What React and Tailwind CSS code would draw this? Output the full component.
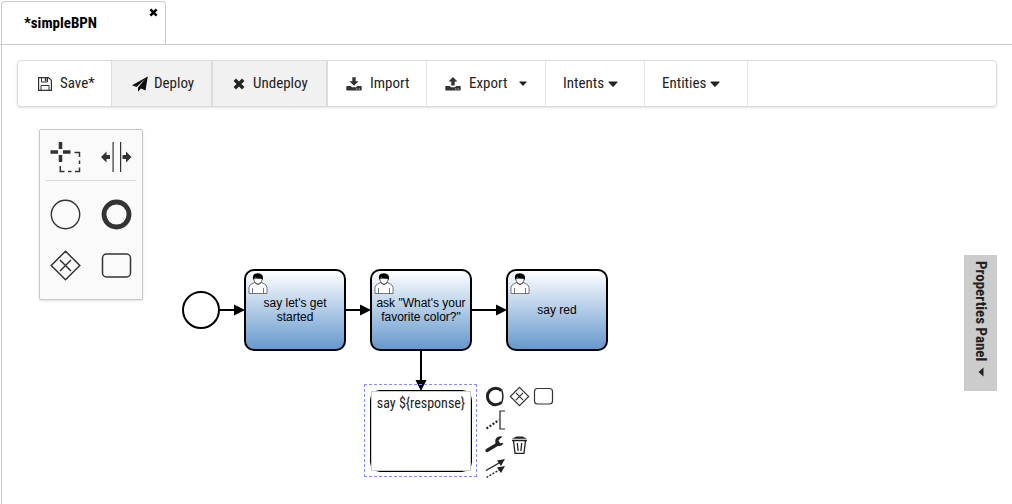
import React from "react";

const SANS = "font-['Roboto_Condensed','Liberation_Sans_Narrow',Roboto,sans-serif]";

function Caret({ className = "h-[6px] w-[10px]" }) {
  return (
    <svg viewBox="0 0 10 6" className={className} aria-hidden="true">
      <path d="M1 .5h8q.8.2.3.9L5.600 5.400q-.6.6-1.200 0L.7 1.400Q.2.700 1 .5z" fill="currentColor" />
    </svg>
  );
}

function CrossIcon({ className }) {
  return (
    <svg viewBox="0 0 12 12" className={className} aria-hidden="true">
      <path d="M1.800 1.800l8.400 8.400M10.200 1.800l-8.400 8.400" stroke="currentColor" strokeWidth="3.400" />
    </svg>
  );
}

function SaveIcon() {
  return (
    <svg viewBox="0 0 14 14" className="h-[14px] w-[14px]" fill="none" stroke="#333" aria-hidden="true">
      <path d="M.6.600h10l2.800 2.800v10H.6z" strokeWidth="1.200" />
      <path d="M3.500.600v4.400h6V.6M3 13.400V8.500h8v4.900" />
      <path d="M6.800 1v3.200h1.700V1z" fill="#333" stroke="none" />
    </svg>
  );
}

function PlaneIcon() {
  return (
    <svg viewBox="0 0 16 16" className="h-[16px] w-[16px]" aria-hidden="true">
      <path d="M15.800.500L13.500 14.500l-4.600-1.900L6 15.800v-4.300L13.200 3 4.500 11 0 9.200z" fill="#111" />
    </svg>
  );
}

function TrayIcon({ up = false }) {
  return (
    <svg viewBox="0 0 16 14" className="h-[14px] w-[16px]" fill="#333" aria-hidden="true">
      <path d={up ? "M6.300 8.500V4.500H3.500L8 0l4.500 4.500H9.700v4z" : "M6.300.200h3.400v4h2.800L8 8.700 3.500 4.200h2.800z"} />
      <path
        fillRule="evenodd"
        d="M1 9h3.500l1.700 1.200h3.600L11.500 9H15q.7 0 .7.700v3q0 .8-.7.800H1q-.7 0-.7-.8v-3Q.3 9 1 9zM10.300 11.500v.9h1v-.9zM12.800 11.500v.9h1v-.9z"
      />
    </svg>
  );
}

function ToolButton({ className = "", children }) {
  return (
    <button type="button" className={"flex items-center border-r text-[15px] text-[#222] " + className}>
      {children}
    </button>
  );
}

function Toolbar() {
  return (
    <div className="mr-[15px] ml-[15px] flex h-[47px] overflow-hidden rounded border border-[#dcdcdc] shadow-sm">
      <ToolButton className="w-[94px] gap-2 border-[#dcdcdc] pl-5"><SaveIcon />Save*</ToolButton>
      <ToolButton className="w-[101px] gap-1.5 border-r-2 border-[#dcdcdc] bg-[#f1f1f1] pl-5"><PlaneIcon />Deploy</ToolButton>
      <ToolButton className="w-[115px] gap-2 border-r-2 border-[#dcdcdc] bg-[#f1f1f1] pl-5"><CrossIcon className="h-3 w-3" />Undeploy</ToolButton>
      <ToolButton className="w-[99px] gap-2 border-[#e4e4e4] pl-[18px]"><TrayIcon />Import</ToolButton>
      <ToolButton className="w-[119px] gap-2 border-[#e4e4e4] pl-[18px]"><TrayIcon up />Export<Caret className="ml-1 h-[5px] w-[8px]" /></ToolButton>
      <ToolButton className="w-[99px] gap-1 border-[#e4e4e4] pl-[17px]">Intents<Caret /></ToolButton>
      <ToolButton className="w-[103px] gap-1 border-[#e4e4e4] pl-[17px]">Entities<Caret /></ToolButton>
    </div>
  );
}

function GatewayIcon({ className }) {
  return (
    <svg viewBox="0 0 32 32" className={className} fill="none" stroke="#333" strokeWidth="1.800" aria-hidden="true">
      <path d="M16 2l14 14-14 14L2 16zM10.500 10.500l11 11M21.500 10.500l-11 11" />
    </svg>
  );
}

function Palette() {
  const cell = "flex h-[51px] w-[51px] items-center justify-center";
  return (
    <div className="absolute top-[129px] left-[39px] h-[171px] w-[104px] rounded-xs border border-[#c8c8c8] bg-[#fafafa] shadow">
      <div className="flex h-[50px] pt-px">
        <button type="button" aria-label="Lasso tool" className={cell}>
          <svg viewBox="0 0 32 32" className="h-8 w-8" fill="none" stroke="#333">
            <path d="M10.500 1v7M10.500 14v7M.5 11H8M13 11h7.500" strokeWidth="3.500" />
            <path d="M10.300 25v5.500h4.200M18 30.500h3.500M25 30.500h4.500v-4M29.500 23v-3.500M29.500 16v-4.500h-5" strokeWidth="1.500" />
          </svg>
        </button>
        <button type="button" aria-label="Space tool" className={cell}>
          <svg viewBox="0 0 32 32" className="h-8 w-8" fill="#333">
            <path d="M11.500 1h1.200v30h-1.200zM19 1h1.200v30h-1.200zM0 16l5.500-5.500v3.500h3.500v4H5.500V21.500zM30.500 16l-5.500-5.500v3.500H21.500v4h3.500V21.500z" />
          </svg>
        </button>
      </div>
      <hr className="mx-1.5 border-[#d5d5d5]" />
      <div className="mt-2 flex flex-wrap">
        <button type="button" aria-label="Start event" className={cell}>
          <svg viewBox="0 0 32 32" className="h-8 w-8"><circle cx="15.500" cy="15.500" r="14.200" fill="none" stroke="#333" strokeWidth="1.400" /></svg>
        </button>
        <button type="button" aria-label="End event" className={cell}>
          <svg viewBox="0 0 32 32" className="h-8 w-8"><circle cx="15.500" cy="15.500" r="12.500" fill="none" stroke="#333" strokeWidth="4.800" /></svg>
        </button>
        <button type="button" aria-label="Gateway" className={cell}>
          <svg viewBox="0 0 32 32" className="h-8 w-8" fill="none" stroke="#333" strokeWidth="1.500"><path d="M15.500 1.200l14.300 14.300-14.300 14.300L1.200 15.500zM10 10l11 11M21 10l-11 11" /></svg>
        </button>
        <button type="button" aria-label="Task" className={cell}>
          <svg viewBox="0 0 32 32" className="h-8 w-8"><rect x="1.500" y="4" width="28" height="23" rx="4" fill="none" stroke="#333" strokeWidth="1.500" /></svg>
        </button>
      </div>
    </div>
  );
}

function Connections() {
  return (
    <svg width="620" height="400" className="pointer-events-none absolute top-0 left-0" aria-hidden="true">
      <circle cx="201" cy="310" r="18" fill="#fff" stroke="#000" strokeWidth="2" />
      <path d="M219 310h17M346 310h16M472 310h26M421 351v31" stroke="#000" strokeWidth="2" />
      <path d="M234 304.500l11 5.500-11 5.500zM360 304.500l11 5.500-11 5.500zM496 304.500l11 5.500-11 5.500zM415.500 380l5.500 11 5.500-11z" />
    </svg>
  );
}

function UserIcon() {
  return (
    <svg viewBox="0 0 20 22" className="absolute top-px left-[2px] h-[22px] w-5" aria-hidden="true">
      <path d="M6.500 10.500Q1 12.500 1 15.500v6h18v-6q0-3-5.500-5z" fill="#fff" stroke="#555" strokeWidth=".8" />
      <path d="M6.500 10.500q3.500 4 7 0M4.500 21.500V16M15.500 21.500V16" fill="none" stroke="#555" strokeWidth=".8" />
      <path d="M5.700 6.500q0 3 2.300 4.800 2 1.500 4 0 2.300-1.800 2.300-4.800z" fill="#fff" stroke="#444" strokeWidth=".8" />
      <path d="M5.200 8Q4 2.500 7 1.700 10 .5 13 2q2.800 1.500 1.700 6-.7-1.700-2.700-1.800Q9 6.500 7.500 5.500 6 6 5.200 8z" fill="#000" />
    </svg>
  );
}

function Task({ className, children }) {
  return (
    <div className={"absolute top-[269px] flex h-[82px] w-[102px] items-center justify-center rounded-[10px] border-2 border-black bg-linear-to-b from-white to-[#6699cc] text-center font-['Liberation_Sans',Arial,sans-serif] text-xs leading-[14px] text-black " + className}>
      <UserIcon />
      <span>{children}</span>
    </div>
  );
}

function ContextPad() {
  return (
    <div className="absolute top-[384px] left-[483px] grid grid-cols-3 text-[#222]">
      <button type="button" aria-label="Append end event" className="size-6">
        <svg viewBox="0 0 24 24"><path d="M18.500 6.800a8.200 8.200 0 1 0 0 11.400" fill="none" stroke="#222" strokeWidth="3" /><path d="M18.800 6.500q2.200 5.500 0 12" fill="none" stroke="#222" strokeWidth="1.500" /></svg>
      </button>
      <button type="button" aria-label="Append gateway" className="flex size-6 items-center justify-center"><GatewayIcon className="h-[21px] w-[21px]" /></button>
      <button type="button" aria-label="Append task" className="size-6">
        <svg viewBox="0 0 24 24"><rect x="3.500" y="4.500" width="18" height="15.500" rx="3" fill="none" stroke="#333" strokeWidth="1.200" /></svg>
      </button>
      <button type="button" aria-label="Add annotation" className="col-span-3 size-6">
        <svg viewBox="0 0 24 24" fill="none" stroke="#222"><path d="M22 3h-5v18h5" strokeWidth="1.200" /><path d="M3.500 20.500L16 12" strokeWidth="2.200" strokeDasharray="2 1.700" /></svg>
      </button>
      <button type="button" aria-label="Change type" className="size-6">
        <svg viewBox="0 0 24 24"><path d="M4 18.500l10-6" stroke="#222" strokeWidth="3.300" strokeLinecap="round" /><path d="M19.500 4.500q-5-1-7 3-1.200 5 3 6.500 3.500.500 5-3l-3.500.3-1.500-3z" fill="#222" /></svg>
      </button>
      <button type="button" aria-label="Remove" className="col-span-2 size-6">
        <svg viewBox="0 0 24 24" fill="none" stroke="#222" strokeWidth="1.300"><path d="M5 8.500h15M6.500 8.500L8 21.300h9L18.500 8.500M10.300 11l.8 8M14.700 11l-.8 8" /><path d="M5 6.800l4.500-2.300h6L20 6.800z" fill="#222" stroke="none" /></svg>
      </button>
      <button type="button" aria-label="Connect" className="size-6">
        <svg viewBox="0 0 24 24" stroke="#222"><path d="M3 14.500l13-7.500" strokeWidth="1.400" /><path d="M3.500 21.500l12.500-7.500" strokeWidth="1.400" strokeDasharray="2 1.500" /><path d="M22 3l-4 7-4-5.500zM22 10l-4 7-4-5.500z" fill="#222" stroke="none" /></svg>
      </button>
    </div>
  );
}

export default function App() {
  return (
    <div className={"relative min-h-screen bg-white text-[#222] " + SANS}>
      <header className="flex h-[45px] border-b border-[#ccc] pl-px">
        <div className="relative mt-px flex w-[165px] items-center rounded-t border border-b-0 border-[#ccc] pl-[22px]">
          <a href="#simpleBPN" className="text-[15px] font-bold text-black">*simpleBPN</a>
          <button type="button" aria-label="Close tab" className="absolute top-[6px] right-[7px] text-black"><CrossIcon className="h-[9px] w-[9px]" /></button>
        </div>
      </header>
      <main className="ml-px min-h-[459px] border-l border-[#ccc] pt-[15px]">
        <Toolbar />
        <Palette />
        <Connections />
        <Task className="left-[244px]">say let's get<br />started</Task>
        <Task className="left-[370px]">ask "What's your<br />favorite color?"</Task>
        <Task className="left-[506px]">say red</Task>
        <div className="absolute top-[384px] left-[364px] h-[93px] w-[113px] border border-dashed border-[#8888ff]" />
        <div className="absolute top-[390px] left-[370px] h-[82px] w-[102px] rounded-[10px] border-2 border-black" />
        <textarea aria-label="Task name" defaultValue="say ${response}" className="absolute top-[391px] left-[371px] h-[80px] w-[100px] resize-none overflow-hidden border border-[#ccc] bg-white pt-[3px] text-center text-sm leading-4 outline-none" />
        <ContextPad />
        <button type="button" className="absolute top-[255px] right-[15px] flex h-[136px] w-[33px] items-center gap-[6px] bg-[#ccc] pt-[6px] text-[15px] leading-[33px] font-bold [writing-mode:vertical-rl]">
          Properties Panel
          <svg viewBox="0 0 6 10" className="h-[10px] w-[6px]" aria-hidden="true"><path d="M5.500.500v9L.5 5z" fill="currentColor" /></svg>
        </button>
      </main>
    </div>
  );
}
